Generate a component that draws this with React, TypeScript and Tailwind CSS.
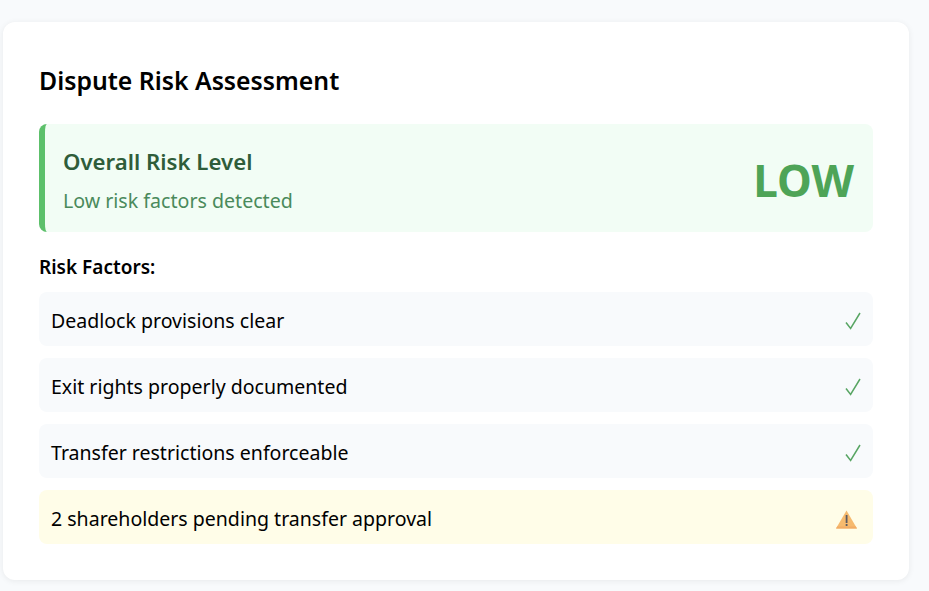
const FONT = "font-['Noto_Sans','Open_Sans',sans-serif]";

function CheckMark() {
  return (
    <svg width="16" height="18" viewBox="0 0 16 18" fill="none">
      <path d="M1 10.5 L5.6 16.4 L15 1" stroke="#58a563" strokeWidth="1.5" />
    </svg>
  );
}

function WarningIcon() {
  return (
    <svg width="21" height="19" viewBox="0 0 21 19" className="mr-1">
      <path d="M10.5 0.5 L21 18.5 H0 Z" fill="#f6ba6e" />
      <path d="M0 18.5 L1.2 16.6 H19.8 L21 18.5 Z" fill="#f2ac64" />
      <rect x="9.7" y="5" width="1.8" height="8" fill="#5a5a62" />
      <rect x="9.7" y="14" width="1.8" height="2" fill="#5a5a62" />
    </svg>
  );
}

function FactorRow({ label, warn }: { label: string; warn?: boolean }) {
  return (
    <div
      className={`flex h-[54px] items-center justify-between rounded-lg pl-3 pr-3 pt-1 ${
        warn ? "bg-[#fffde8]" : "bg-[#f8fafc]"
      }`}
    >
      <span className="text-[19.55px] text-black">{label}</span>
      {warn ? <WarningIcon /> : <CheckMark />}
    </div>
  );
}

export default function App() {
  return (
    <div className={`${FONT} min-h-[591px] bg-[#f8fafc] pl-[3px] pr-5 pt-[22px]`}>
      <div className="rounded-xl bg-white p-9 shadow-[0_1px_6px_rgba(0,0,0,0.07)]">
        <h2 className="mb-[22px] text-[24.8px] font-semibold leading-[44px] text-black">
          Dispute Risk Assessment
        </h2>
        <div className="flex h-[108px] items-center justify-between rounded-lg border-l-[6px] border-[#5dc06b] bg-[#f2fdf5] pl-[18px] pr-[19px]">
          <div className="pt-1">
            <div className="text-[22.2px] font-semibold leading-[34px] text-[#2f5d3a]">Overall Risk Level</div>
            <div className="mt-[7px] text-[19.6px] leading-[30px] text-[#4a8a5b]">Low risk factors detected</div>
          </div>
          <div className="pt-1 text-[44px] font-bold leading-none text-[#4ea457]">LOW</div>
        </div>
        <div className="mb-[10px] mt-5 text-[19px] font-semibold leading-[30px] text-black">Risk Factors:</div>
        <div className="flex flex-col gap-3">
          <FactorRow label="Deadlock provisions clear" />
          <FactorRow label="Exit rights properly documented" />
          <FactorRow label="Transfer restrictions enforceable" />
          <FactorRow label="2 shareholders pending transfer approval" warn />
        </div>
      </div>
    </div>
  );
}
